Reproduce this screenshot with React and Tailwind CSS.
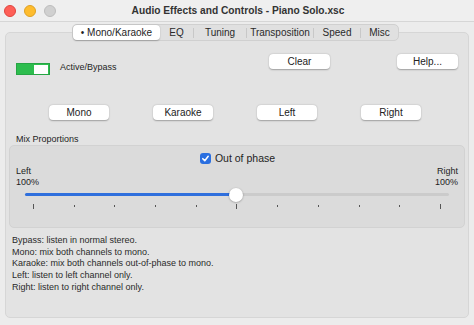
import React from "react";

const font = { fontFamily: '"Liberation Sans", Arial, sans-serif' };

function Btn({ children, w = "w-[61px]" }) {
  return (
    <div className={`${w} h-[15px] bg-white rounded-[4px] shadow-[0_0.5px_1.5px_rgba(0,0,0,0.3)] flex items-center justify-center text-[10px] text-[#222]`}>
      {children}
    </div>
  );
}

export default function App() {
  const tabs = [
    { t: "• Mono/Karaoke", w: "w-[87px]", sel: true },
    { t: "EQ", w: "w-[33px]" },
    { t: "Tuning", w: "w-[52px]" },
    { t: "Transposition", w: "w-[66px]" },
    { t: "Speed", w: "w-[46px]" },
    { t: "Misc", w: "w-[37px]" },
  ];
  const ticks = Array.from({ length: 11 });
  return (
    <div style={font} className="w-[474px] h-[325px] bg-[#ececec] flex flex-col overflow-hidden text-[#1e1e1e]">
      {/* title bar */}
      <div className="h-[22px] bg-[#efefef] border-b border-[#d6d6d6] flex items-center relative shrink-0">
        <div className="flex gap-[8px] pl-[4px] items-center">
          <div className="w-[12px] h-[12px] rounded-full bg-[#fe5f57] border border-[#e0443e]" />
          <div className="w-[12px] h-[12px] rounded-full bg-[#febc2e] border border-[#dea123]" />
          <div className="w-[12px] h-[12px] rounded-full bg-[#d0d0d0] border border-[#bdbdbd]" />
        </div>
        <div className="absolute inset-0 flex items-center justify-center text-[10.2px] font-bold text-[#333] pl-[2px]">
          Audio Effects and Controls - Piano Solo.xsc
        </div>
      </div>
      {/* body */}
      <div className="flex-1 flex flex-col px-[5px] pb-[7px]">
        <div className="flex justify-center mt-[2px] relative z-10 pr-[3px]">
          <div className="flex h-[17px] bg-[#e0e0e0] border border-[#d0d0d0] rounded-[5px] items-center text-[10px]">
            {tabs.map((tb, i) => (
              <div key={i} className="flex items-center h-full">
                {i > 1 && <div className="w-px h-[10px] bg-[#c8c8c8]" />}
                <div
                  className={`${tb.w} h-full flex items-center justify-center ${
                    tb.sel ? "bg-white rounded-[4px] shadow-[0_0.5px_1.5px_rgba(0,0,0,0.25)]" : "text-[#2a2a2a]"
                  }`}
                >
                  {tb.t}
                </div>
              </div>
            ))}
          </div>
        </div>
        <div className="-mt-[9px] flex-1 bg-[#e3e3e3] border border-[#d6d6d6] rounded-[5px] flex flex-col pt-[21px]">
          {/* row 1 */}
          <div className="flex items-start">
            <div className="w-[263px] flex items-center pl-[10px] mt-[9px]">
              <div className="w-[34px] h-[12px] bg-[#2dbd4e] border border-[#26a544] flex justify-end items-center pr-[1px]">
                <div className="w-[14px] h-[9px] bg-white" />
              </div>
              <span className="ml-[10px] text-[9px] -mt-[3px]">Active/Bypass</span>
            </div>
            <Btn>Clear</Btn>
            <div className="w-[67px]" />
            <Btn>Help...</Btn>
          </div>
          {/* row 2 */}
          <div className="flex gap-[44px] pl-[43px] mt-[30px]">
            <Btn w="w-[60px]">Mono</Btn>
            <Btn w="w-[60px]">Karaoke</Btn>
            <Btn w="w-[60px]">Left</Btn>
            <Btn w="w-[60px]">Right</Btn>
          </div>
          <div className="text-[9px] pl-[10px] mt-[14px] leading-[11px]">Mix Proportions</div>
          {/* group box */}
          <div className="mx-[3px] mt-[0px] h-[83px] bg-[#dbdbdb] border border-[#d2d2d2] rounded-[5px] flex flex-col">
            <div className="flex justify-center items-center mt-[5px] pl-[1px]">
              <div className="w-[11px] h-[11px] rounded-[3px] bg-[#2a6fe0] flex items-center justify-center">
                <svg width="9" height="9" viewBox="0 0 10 10">
                  <path d="M2 5.2 L4.2 7.4 L8 2.6" stroke="white" strokeWidth="1.7" fill="none" strokeLinecap="round" strokeLinejoin="round" />
                </svg>
              </div>
              <span className="ml-[4px] text-[10.5px]">Out of phase</span>
            </div>
            <div className="flex justify-between px-[6px] text-[9px] leading-[11px] -mt-[1px]">
              <div>
                <div>Left</div>
                <div>100%</div>
              </div>
              <div className="text-right">
                <div>Right</div>
                <div>100%</div>
              </div>
            </div>
            {/* slider */}
            <div className="relative mx-[15px] mt-[0px] h-[14px] flex items-center">
              <div className="w-full h-[3px] bg-[#cbcbcb] rounded-full flex">
                <div className="w-[211px] h-full bg-[#2f6fdd] rounded-full" />
              </div>
              <div className="absolute left-[204px] top-0 w-[14px] h-[14px] rounded-full bg-white shadow-[0_0.5px_2px_rgba(0,0,0,0.35)]" />
            </div>
            <div className="flex justify-between mx-[23px] mt-[2px] items-start">
              {ticks.map((_, i) => (
                <div
                  key={i}
                  className={`w-px bg-[#555] ${i === 0 || i === 5 || i === 10 ? "h-[5px]" : "h-[2px] mt-[1px]"}`}
                />
              ))}
            </div>
          </div>
          {/* descriptions */}
          <div className="pl-[6px] mt-[7px] text-[9px] leading-[11.7px] text-[#2a2a2a]">
            <div>Bypass: listen in normal stereo.</div>
            <div>Mono: mix both channels to mono.</div>
            <div>Karaoke: mix both channels out-of-phase to mono.</div>
            <div>Left: listen to left channel only.</div>
            <div>Right: listen to right channel only.</div>
          </div>
        </div>
      </div>
    </div>
  );
}
